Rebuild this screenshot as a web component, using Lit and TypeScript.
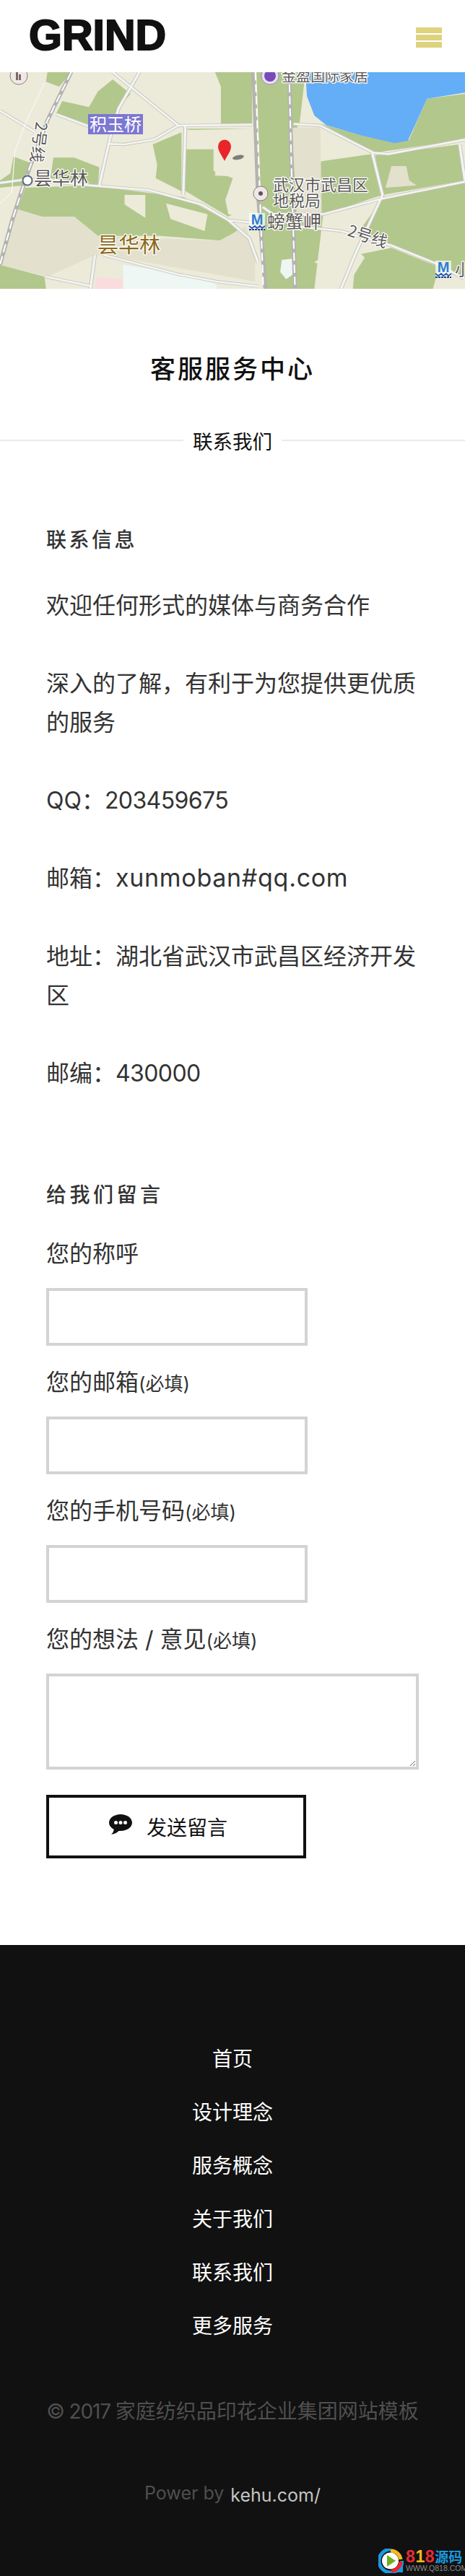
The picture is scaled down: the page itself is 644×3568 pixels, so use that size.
import { LitElement, html, css, svg } from "lit";
import { customElement } from "lit/decorators.js";

const mapShapes = svg`
  <g transform="scale(0.4107,0.3333)">
    <rect width="1568" height="900" fill="#ecead9"/>
    <path class="g" d="M160,0 L240,0 L200,60 L155,40Z"/>
    <path class="g" d="M380,30 L440,90 L400,150 L370,250 L190,170 L210,120 L300,145 L330,80Z"/>
    <path class="g" d="M725,0 L850,0 L850,215 L745,215 L745,60Z"/>
    <path class="g" d="M515,300 L612,250 L612,495 L525,440 L530,385Z"/>
    <path class="g" d="M625,235 L850,235 L640,240Z"/>
    <path class="g" d="M625,320 L720,320 L720,410 L785,440 L760,530 L800,580 L770,600 L620,490Z"/>
    <path class="g" d="M45,350 L110,380 L80,470 L0,480 L0,450 L35,420Z"/>
    <path class="g" d="M180,355 L250,355 L335,395 L330,470 L170,440Z"/>
    <path class="g" d="M85,480 L300,470 L620,520 L770,620 L810,650 L750,700 L540,680 L330,680 L250,600 L140,600 L60,570Z"/>
    <path class="g" d="M0,800 L150,850 L155,900 L0,900Z"/>
    <path class="g" d="M865,0 L1005,0 L1000,500 L1085,370 L1255,340 L1290,510 L1090,590 L1060,900 L890,900Z"/>
    <path class="g" d="M1000,0 L1030,0 L1010,215 L990,215Z"/>
    <path class="g" d="M1085,215 L1260,335 L1568,280 L1568,90 L1440,110 L1380,280 L1210,260Z"/>
    <path class="g" d="M1265,345 L1550,300 L1568,450 L1290,510Z"/>
    <path class="g" d="M1290,525 L1568,455 L1568,860 L1320,720 L1200,680Z"/>
    <path class="g" d="M1200,760 L1320,730 L1480,810 L1460,900 L1190,900Z"/>
    <path class="b" d="M60,570 L140,600 L250,600 L330,680 L530,690 L740,700 L830,640 L860,780 L860,870 L450,780 L320,760 L160,850 L0,800Z"/>
    <path class="b" d="M985,230 L1080,230 L1085,590 L1000,590Z"/>
    <path class="b" d="M1300,780 L1320,690 L1370,690 L1380,750 L1405,770Z" transform="translate(0,-300)"/>
    <path class="l" d="M420,510 L490,510 L490,605 L420,550Z"/>
    <path class="l" d="M560,545 L700,590 L690,660 L575,610Z"/>
    <path class="l" d="M640,250 L850,240 L850,435 L725,430 L735,300 L640,315Z"/>
    <path class="l" d="M800,450 L850,460 L855,610 L770,590 L760,530Z" />
    <path class="l" d="M1060,790 L1170,700 L1230,770 L1190,850Z"/>
    <path fill="#eef7f4" d="M415,800 L620,840 L730,880 L730,900 L415,900Z"/>
    <path fill="#fbdcdc" d="M325,850 L415,860 L415,900 L320,900Z"/>
    <path fill="#eef5f2" d="M950,780 L985,775 L988,840 L965,860 L945,830Z"/>
    <path fill="#63aef6" d="M1030,0 L1568,0 L1568,85 L1440,110 L1400,220 L1375,285 L1330,295 L1210,260 L1100,220 L1060,180 L1035,100Z"/>

    <g class="ro">
      <path d="M380,0 L600,220"/><path d="M470,0 L400,150 L370,280 L335,470"/>
      <path d="M190,175 L300,225"/><path d="M0,160 L120,250"/>
      <path d="M370,298 L420,300 L520,280 L600,222 L850,218"/>
      <path d="M0,460 L90,445 L300,470 L500,490 L680,550 L770,615 L850,625"/>
      <path d="M770,615 L840,690 L870,790"/><path d="M625,225 L618,510"/>
      <path d="M990,215 L1080,222 L1260,335 L1310,340 L1568,280"/>
      <path d="M1255,335 L1290,510 L1200,750 L1150,900"/>
      <path d="M1090,590 L1290,525 L1568,455"/>
      <path d="M886,560 L920,590 L1090,590"/>
      <path d="M1000,640 L1150,660 L1320,720 L1480,800 L1568,860"/>
      <path d="M350,760 L600,840 L730,870 L870,890"/>
      <path d="M1550,300 L1568,450"/><path d="M155,850 L310,890"/><path d="M320,760 L305,900"/>
    </g>
    <g class="ri">
      <path d="M380,0 L600,220"/><path d="M470,0 L400,150 L370,280 L335,470"/>
      <path d="M190,175 L300,225"/><path d="M0,160 L120,250"/>
      <path d="M370,298 L420,300 L520,280 L600,222 L850,218"/>
      <path d="M0,460 L90,445 L300,470 L500,490 L680,550 L770,615 L850,625"/>
      <path d="M770,615 L840,690 L870,790"/><path d="M625,225 L618,510"/>
      <path d="M990,215 L1080,222 L1260,335 L1310,340 L1568,280"/>
      <path d="M1255,335 L1290,510 L1200,750 L1150,900"/>
      <path d="M1090,590 L1290,525 L1568,455"/>
      <path d="M886,560 L920,590 L1090,590"/>
      <path d="M1000,640 L1150,660 L1320,720 L1480,800 L1568,860"/>
      <path d="M350,760 L600,840 L730,870 L870,890"/>
      <path d="M1550,300 L1568,450"/><path d="M155,850 L310,890"/><path d="M320,760 L305,900"/>
    </g>
    <path class="thin" d="M150,45 L90,200 L50,330 L40,500 L0,545"/>
    <g class="rail">
      <path d="M240,0 L160,200 L90,430 L40,620 L0,800"/>
      <path d="M855,0 L870,500 L895,900"/><path d="M975,0 L985,500 L995,900"/>
    </g>
    <g class="dash">
      <path d="M240,0 L160,200 L90,430 L40,620 L0,800"/>
      <path d="M861,0 L876,500 L888,900"/><path d="M975,0 L985,500 L995,900"/>
    </g>
  </g>
`;

const metro = (x: number, y: number) => svg`
  <rect x=${x - 11} y=${y - 12} width="22" height="24" fill="#fff" opacity=".7"/>
  <text class="m" x=${x} y=${y + 4} text-anchor="middle">M</text>
  <path d="M${x - 11},${y + 6} l4,3 l4,-3 l3,3 l4,-3 l3,3 l4,-3" fill="none" stroke="#2a5bb0" stroke-width="2"/>
  <path d="M${x - 11},${y + 11} h22" stroke="#1d3f88" stroke-width="2" stroke-dasharray="3 1"/>
`;

@customElement("app-root")
export class AppRoot extends LitElement {
  static styles = css`
    :host {
      display: block;
      position: relative;
      width: 644px;
      background: #fff;
      font-family: "Inter", "Noto Sans CJK SC", sans-serif;
      color: #333;
    }
    * { box-sizing: border-box; }
    header {
      height: 100px;
      display: flex;
      align-items: center;
      justify-content: space-between;
      padding: 0 32px 0 40px;
    }
    .logo {
      font: 700 59px/1 "Liberation Sans", sans-serif;
      color: #111;
      -webkit-text-stroke: 2px #111;
      margin-top: -1px;
    }
    .burger {
      width: 36px;
      display: flex;
      flex-direction: column;
      gap: 2px;
      margin-top: 4px;
    }
    .burger i { display: block; height: 8px; background: #dfd27e; }
    .map { display: block; width: 644px; height: 300px; overflow: hidden; }
    .map .g { fill: #b2c78c; }
    .map .b { fill: #e3e0cd; }
    .map .l { fill: #ecead9; }
    .map .ro path { fill: none; stroke: #c6c6c1; stroke-width: 13; }
    .map .ri path { fill: none; stroke: #f4f4f1; stroke-width: 8; }
    .map .thin { fill: none; stroke: #f8f8f4; stroke-width: 3; }
    .map .rail path { fill: none; stroke: #b3b3b0; stroke-width: 14; }
    .map .dash path { fill: none; stroke: #fff; stroke-width: 5; stroke-dasharray: 34 16; }
    .map text {
      font-family: "Noto Sans CJK SC", sans-serif;
      fill: #5c5856;
      stroke: #fff;
      stroke-width: 2.5px;
      paint-order: stroke;
      stroke-linejoin: round;
    }
    .map .t20 { font-size: 20px; }
    .map .t22 { font-size: 22px; }
    .map .t25 { font-size: 25px; }
    .map .brown { font-size: 29px; fill: #8c6a16; }
    .map .bridge { font-size: 24px; fill: #fff; stroke: none; }
    .map .m { font: 700 20px "Liberation Sans", sans-serif; fill: #2f7fd0; stroke: none; }

    .title {
      margin: 81px 0 0;
      font-size: 35px;
      line-height: 60px;
      font-weight: 500;
      letter-spacing: 3px;
      text-align: center;
      color: #111;
    }
    .sub {
      margin-top: 49px;
      height: 40px;
      display: flex;
      align-items: center;
      gap: 13px;
      font-size: 27.5px;
      color: #111;
    }
    .sub::before, .sub::after {
      content: "";
      flex: 1;
      height: 2px;
      background: #eaeaea;
    }
    main { padding: 0 64px; }
    h3 {
      margin: 0;
      font-size: 28px;
      line-height: 40px;
      font-weight: 500;
      letter-spacing: 3.5px;
      color: #333;
    }
    .h-contact { margin-top: 98px; }
    .info { margin-top: 44px; display: flex; flex-direction: column; gap: 54px; }
    .info p { margin: 0; font-size: 32px; line-height: 54px; color: #333; }
    .lat { font-size: 34px; line-height: 0; letter-spacing: 0.7px; }
    .num { letter-spacing: -0.6px; }
    .h-msg { margin-top: 121px; letter-spacing: 4.5px; }
    form { display: flex; flex-direction: column; align-items: flex-start; margin-top: 35px; }
    label { font-size: 32px; line-height: 54px; color: #333; white-space: nowrap; }
    label small { font-size: 26px; line-height: 0; }
    .slash { font-family: "Inter", sans-serif; }
    input, textarea {
      display: block;
      margin: 20px 0 24px;
      padding: 0;
      border: 4px solid #d3d3d3;
      border-radius: 0;
      background: #fff;
      outline: none;
    }
    input { width: 362px; height: 80px; }
    textarea { width: 516px; height: 133px; margin-bottom: 35px; }
    button {
      width: 360px;
      height: 88px;
      border: 4px solid #111;
      background: #fff;
      color: #111;
      display: flex;
      align-items: center;
      justify-content: center;
      gap: 20px;
      font: 400 28px "Noto Sans CJK SC", sans-serif;
      padding: 0 22px 0 0;
      margin-bottom: 120px;
    }
    button svg { width: 32px; height: 28px; margin-top: -6px; }
    footer {
      background: #111;
      padding: 121px 0 88px;
      text-align: center;
    }
    footer nav a {
      display: block;
      height: 74px;
      line-height: 74px;
      font-size: 28px;
      color: #fff;
    }
    .copy {
      margin: 54px 0 0;
      font-size: 28px;
      line-height: 54px;
      color: #4f4f4f;
      white-space: nowrap;
    }
    .copy span { letter-spacing: -1.1px; }
    .power {
      margin: 59px 0 0;
      font-size: 25px;
      line-height: 54px;
      color: #4f4f4f;
    }
    .power a { color: #c4c4c4; margin-left: 2px; vertical-align: -3px; line-height: 0; }
    .badge {
      position: absolute;
      left: 524px;
      top: 3530px;
      width: 112px;
      height: 34px;
      display: flex;
      gap: 3px;
    }
    .badge svg { width: 35px; height: 34px; flex: none; }
    .badge-t { display: flex; flex-direction: column; }
    .badge-top {
      font: 700 23px/22px "Liberation Sans", "Noto Sans CJK SC", sans-serif;
      white-space: nowrap;
      letter-spacing: 0.6px;
    }
    .r { color: #ea2a33; }
    .y { color: #f8b81c; }
    .bl { color: #1a9ae0; font-size: 19px; font-family: "Noto Sans CJK SC", sans-serif; letter-spacing: 0; }
    .badge-b {
      font: 400 10.5px/11px "Liberation Sans", sans-serif;
      color: #8a8a8a;
      white-space: nowrap;
    }
  `;

  render() {
    return html`
      <header>
        <div class="logo">GRIND</div>
        <div class="burger"><i></i><i></i><i></i></div>
      </header>
      <svg class="map" viewBox="0 0 644 300">
        ${mapShapes}
        <circle cx="26" cy="5" r="12" fill="#efe8e6" stroke="#8a7d7a" stroke-width="1"/>
        <rect x="22" y="0" width="3" height="11" fill="#7a6a66"/><rect x="26" y="3" width="3" height="8" fill="#7a6a66"/>
        <circle cx="374" cy="5" r="12" fill="#e8e0f0" stroke="#9c8abf"/>
        <circle cx="374" cy="5" r="8" fill="#7a49b8"/>
        <text class="t20" x="390" y="13">金盈国际家居</text>
        <rect x="122" y="58" width="76" height="28" fill="#7c77d1"/>
        <text class="bridge" x="160" y="81" text-anchor="middle">积玉桥</text>
        <text class="t22" transform="translate(50,68) rotate(98)">2号线</text>
        <circle cx="38" cy="150" r="6.5" fill="#fff" stroke="#55677a" stroke-width="2"/>
        <text class="t25" x="47" y="156">昙华林</text>
        <text class="brown" x="135" y="250">昙华林</text>
        <ellipse cx="330" cy="118" rx="8" ry="3" fill="#7f7f78" transform="rotate(-12 330 118)"/>
        <path d="M311,123 C308,116 302,110 302,103 A9,9.5 0 0 1 320,103 C320,110 314,116 311,123Z" fill="#e8262a"/>
        <circle cx="361" cy="168" r="10" fill="#efe8e6" stroke="#8a7d7a"/>
        <circle cx="361" cy="168" r="3" fill="#5c5856"/>
        <text class="t22" x="378" y="164">武汉市武昌区</text>
        <text class="t22" x="378" y="186">地税局</text>
        ${metro(356, 207)}
        <text class="t25" x="370" y="216">螃蟹岬</text>
        <text class="t22" transform="translate(480,226) rotate(18)">2号线</text>
        ${metro(614, 273)}
        <text class="t22" x="630" y="281">小</text>
      </svg>
      <h1 class="title">客服服务中心</h1>
      <div class="sub"><span>联系我们</span></div>
      <main>
        <h3 class="h-contact">联系信息</h3>
        <div class="info">
          <p>欢迎任何形式的媒体与商务合作</p>
          <p>深入的了解，有利于为您提供更优质的服务</p>
          <p>QQ：<span class="num">203459675</span></p>
          <p>邮箱：<span class="lat">xunmoban#qq.com</span></p>
          <p>地址：湖北省武汉市武昌区经济开发区</p>
          <p>邮编：<span class="num">430000</span></p>
        </div>
        <h3 class="h-msg">给我们留言</h3>
        <form>
          <label>您的称呼</label>
          <input type="text" />
          <label>您的邮箱<small>(必填)</small></label>
          <input type="text" />
          <label>您的手机号码<small>(必填)</small></label>
          <input type="text" />
          <label>您的想法 <span class="slash">/</span> 意见<small>(必填)</small></label>
          <textarea></textarea>
          <button type="button">
            <svg viewBox="0 0 32 28">
              <path d="M16,0 C7.2,0 0,5.1 0,11.5 C0,15.4 2.7,18.8 6.8,20.9 C6.4,23.4 5.3,25.8 3,27.8 C7.4,27.4 11,25.5 13.5,22.9 C14.3,23 15.2,23 16,23 C24.8,23 32,17.9 32,11.5 C32,5.1 24.8,0 16,0Z" fill="#111"/>
              <circle cx="9.5" cy="11.5" r="2.5" fill="#fff"/><circle cx="16" cy="11.5" r="2.5" fill="#fff"/><circle cx="22.5" cy="11.5" r="2.5" fill="#fff"/>
            </svg>
            <span>发送留言</span>
          </button>
        </form>
      </main>
      <footer>
        <nav>
          <a>首页</a><a>设计理念</a><a>服务概念</a><a>关于我们</a><a>联系我们</a><a>更多服务</a>
        </nav>
        <p class="copy"><span>© 2017 </span>家庭纺织品印花企业集团网站模板</p>
        <p class="power">Power by <a>kehu.com/</a></p>
      </footer>
      <div class="badge">
        <svg viewBox="0 0 35 34">
          <path d="M33,17 A16,16 0 1 1 17,1" fill="none" stroke="#1a9ae0" stroke-width="5"/>
          <path d="M17,3 A14,14 0 0 1 31,15" fill="none" stroke="#f8b81c" stroke-width="5"/>
          <path d="M31,18 A14,14 0 0 1 18,31" fill="none" stroke="#e8262c" stroke-width="5"/>
          <circle cx="16.5" cy="17" r="11.5" fill="#fff"/>
          <path d="M12,9 L24,17 L12,25Z" fill="#6db01e"/>
          <path d="M24,33 L34,33 L34,23 Z" fill="#1a9ae0"/>
        </svg>
        <div class="badge-t">
          <div class="badge-top"><span class="r">8</span><span class="y">1</span><span class="r">8</span><span class="bl">源码</span></div>
          <div class="badge-b">WWW.Q818.COM</div>
        </div>
      </div>
    `;
  }
}
